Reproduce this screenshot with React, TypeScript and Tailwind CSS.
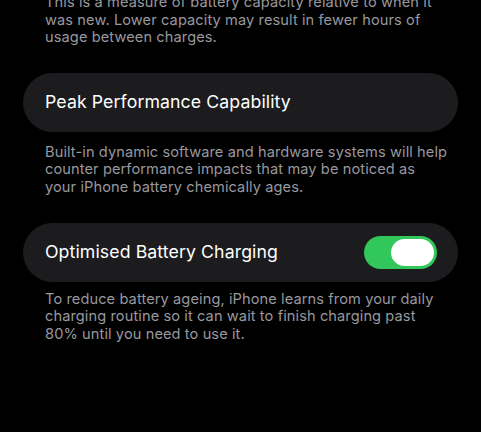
import React from 'react'

const font = { fontFamily: 'Inter, "Noto Sans", "Liberation Sans", sans-serif' }

function Footnote({ children, className = '' }: { children: React.ReactNode; className?: string }) {
  return (
    <p className={`whitespace-nowrap pl-[45px] text-[14.6px] leading-[17.6px] text-[#98989e] tracking-[0.1px] ${className}`}>
      {children}
    </p>
  )
}

function Toggle({ on }: { on: boolean }) {
  return (
    <div
      className={`flex h-[33px] w-[73px] items-center rounded-full p-[3px] ${
        on ? 'justify-end bg-[#32c75a]' : 'justify-start bg-[#39393d]'
      }`}
    >
      <div className="h-[27px] w-[43px] rounded-full bg-white" />
    </div>
  )
}

function Row({ title, toggle }: { title: string; toggle?: boolean }) {
  return (
    <div className="mx-[23px] flex h-[59px] items-center justify-between rounded-full bg-[#1c1c1e] pl-[22px] pr-[21px]">
      <span className="text-[17.7px] text-white tracking-[0.1px]">{title}</span>
      {toggle !== undefined && <Toggle on={toggle} />}
    </div>
  )
}

export default function App() {
  return (
    <div className="h-[432px] w-[481px] overflow-hidden bg-black" style={font}>
      <Footnote className="-mt-[6px]">
        This is a measure of battery capacity relative to when it
        <br />
        was new. Lower capacity may result in fewer hours of
        <br />
        usage between charges.
      </Footnote>

      <div className="mt-[26px]">
        <Row title="Peak Performance Capability" />
      </div>
      <Footnote className="mt-[12px]">
        Built-in dynamic software and hardware systems will help
        <br />
        counter performance impacts that may be noticed as
        <br />
        your iPhone battery chemically ages.
      </Footnote>

      <div className="mt-[26px]">
        <Row title="Optimised Battery Charging" toggle />
      </div>
      <Footnote className="mt-[9px]">
        To reduce battery ageing, iPhone learns from your daily
        <br />
        charging routine so it can wait to finish charging past
        <br />
        80% until you need to use it.
      </Footnote>
    </div>
  )
}
